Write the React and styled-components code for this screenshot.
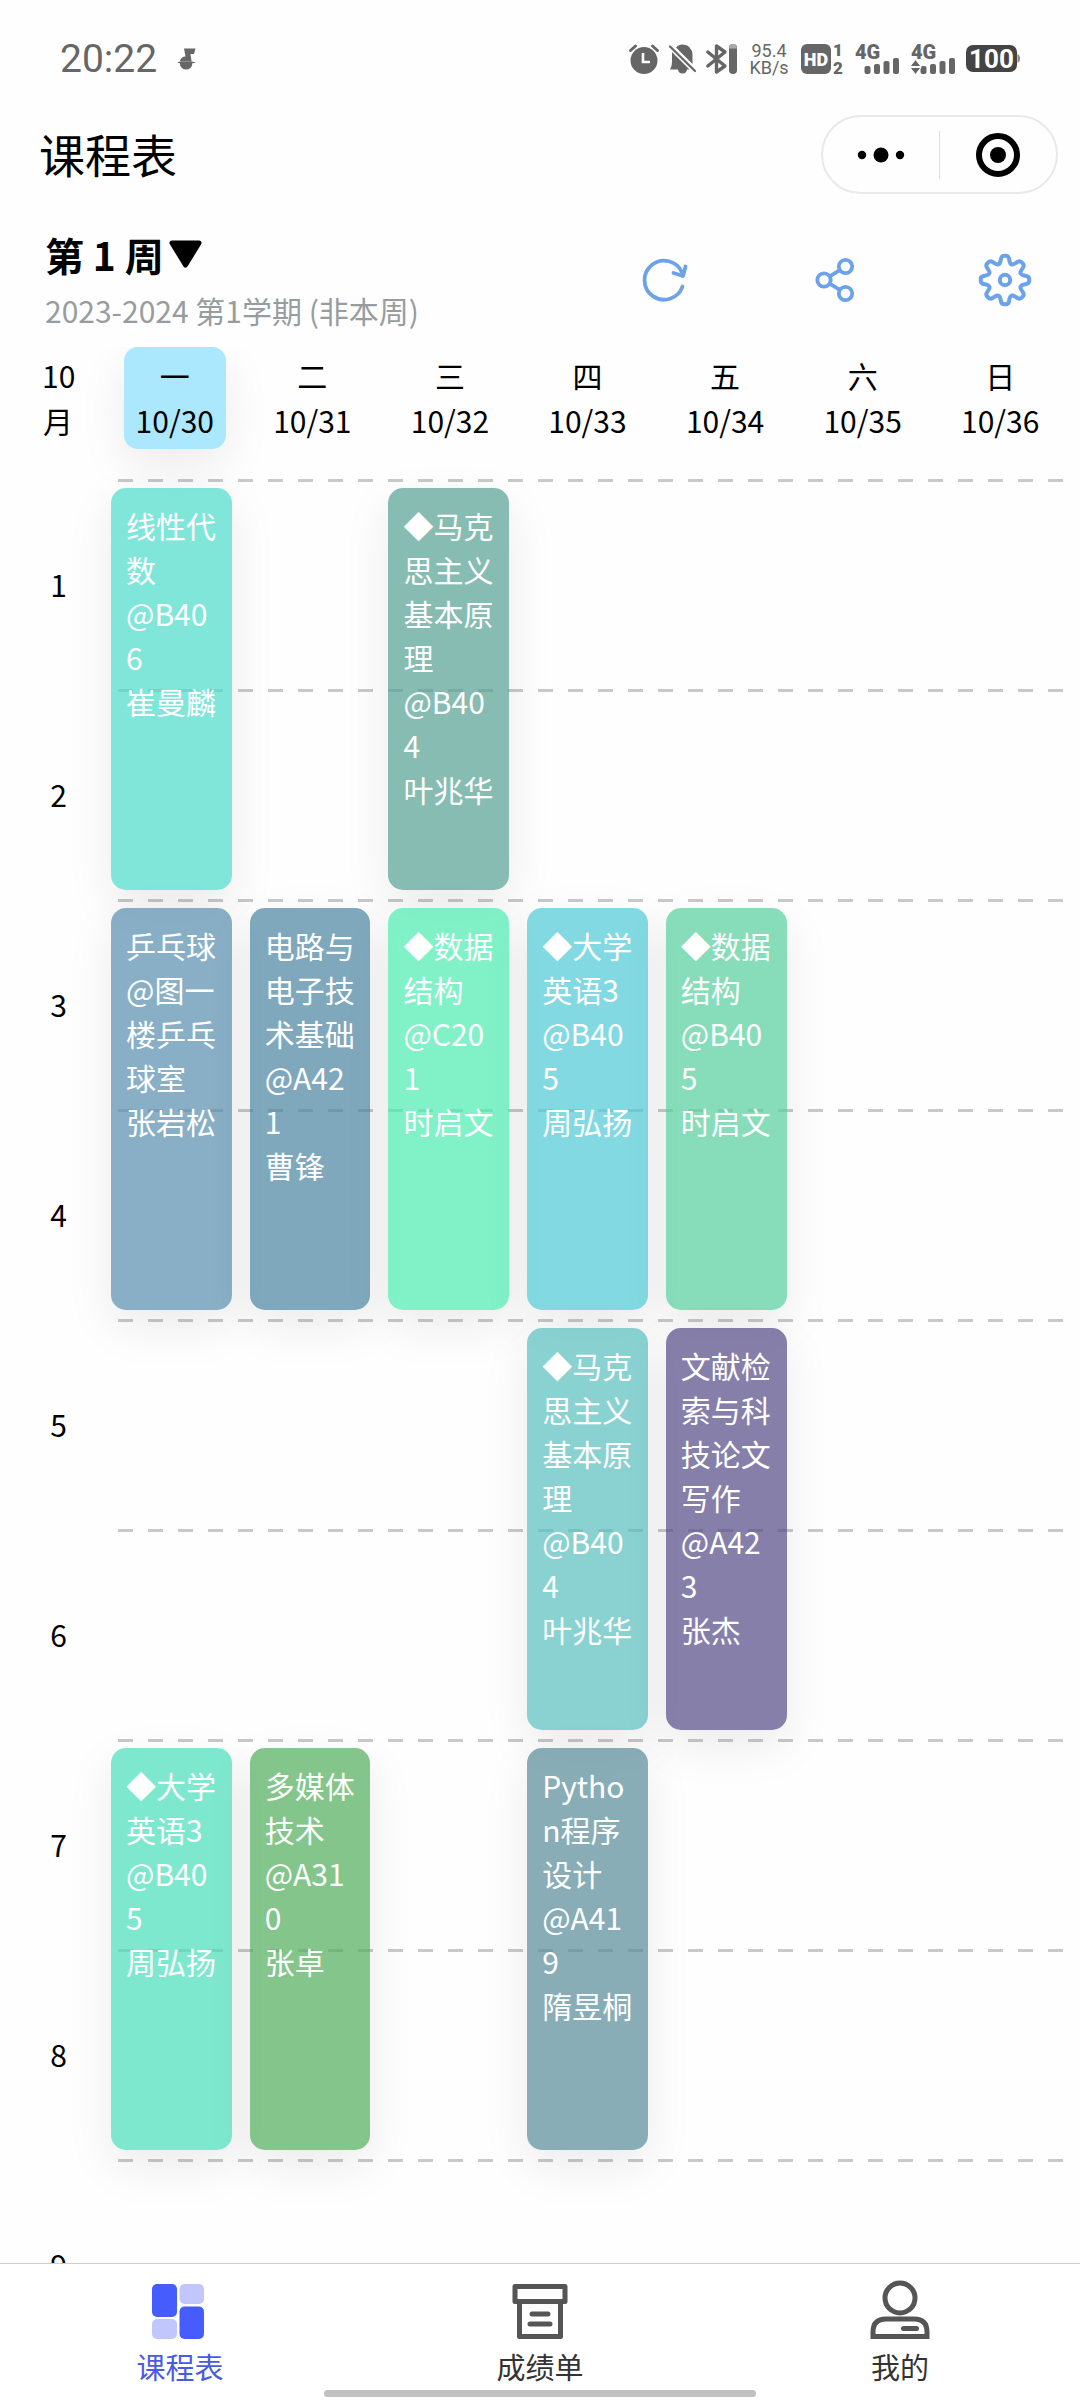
import React from "react";
import styled, { createGlobalStyle } from "styled-components";

const GlobalStyle = createGlobalStyle`
  * { box-sizing: border-box; }
  body {
    margin: 0;
    background: #fefefe;
    color: #000;
    font-family: "Noto Sans CJK SC", "Noto Sans", sans-serif;
    font-size: 30px;
    line-height: 44px;
  }
  button { font: inherit; color: inherit; background: none; border: 0; padding: 0; margin: 0; cursor: pointer; }
  svg { display: block; flex: none; overflow: visible; }
`;

const Screen = styled.div`
  display: flex;
  flex-direction: column;
  height: 100vh;
`;

/* ---------- status bar ---------- */

const StatusBar = styled.header`
  display: flex;
  align-items: center;
  justify-content: space-between;
  height: 115px;
  flex: none;
  padding: 2px 60px 0;
  color: #666;
`;

const StatusGroup = styled.div`
  display: flex;
  align-items: center;
  gap: ${(p) => p.$gap}px;
`;

const Clock = styled.time`
  font-family: Roboto, sans-serif;
  font-size: 39px;
`;

const Speed = styled.div`
  width: 44px;
  font-family: Roboto, sans-serif;
  font-size: 18px;
  line-height: 17px;
  text-align: center;
`;

/* ---------- title bar ---------- */

const TitleBar = styled.div`
  display: flex;
  align-items: center;
  justify-content: space-between;
  flex: none;
  padding: 0 22px 0 39px;
`;

const Title = styled.h1`
  margin: 0;
  padding-bottom: 3px;
  font-size: 46px;
  font-weight: 400;
  line-height: 76px;
`;

const Capsule = styled.div`
  display: flex;
  align-items: center;
  width: 237px;
  height: 79px;
  border: 2px solid #e9e9e9;
  border-radius: 40px;
`;

const CapsuleButton = styled.button`
  display: flex;
  align-items: center;
  justify-content: center;
  flex: 1;
  height: 48px;
  & + & { border-left: 1px solid #ddd; }
`;

/* ---------- week header ---------- */

const WeekBar = styled.section`
  display: flex;
  justify-content: space-between;
  align-items: flex-start;
  flex: none;
  padding: 38px 45px 15px;
`;

const WeekInfo = styled.div`
  display: flex;
  flex-direction: column;
  align-items: flex-start;
  gap: 12px;
`;

const WeekButton = styled.button`
  display: flex;
  align-items: center;
  gap: 5px;
  font-size: 39px;
  font-weight: 700;
`;

const Term = styled.p`
  margin: 0;
  color: #979d9f;
`;

const Actions = styled.div`
  display: flex;
  gap: 110px;
`;

const ActionButton = styled.button`
  display: flex;
  align-items: center;
  justify-content: center;
  width: 60px;
  height: 96px;
`;

/* ---------- timetable ---------- */

const Viewport = styled.main`
  flex: 1;
  min-height: 0;
  overflow: hidden;
`;

const Table = styled.table`
  display: block;
`;

const Head = styled.thead`
  display: block;
  padding-bottom: 30px;
  line-height: 45px;
`;

const Body = styled.tbody`
  display: block;
`;

const HeadRow = styled.tr`
  display: grid;
  grid-template-columns: 106px repeat(7, 1fr);
  padding-right: 11px;
`;

const MonthCell = styled.th`
  padding: 6px 32px 6px 42px;
  font-weight: 400;
`;

const DayCell = styled.th`
  padding: 0 18px;
  font-weight: 400;
`;

const DayBox = styled.div`
  display: flex;
  flex-direction: column;
  padding: 6px 0;
  border-radius: 14px;
  white-space: nowrap;
  background: ${(p) => (p.$today ? "#abe8fe" : "transparent")};
  box-shadow: ${(p) => (p.$today ? "0 16px 48px rgba(0, 0, 0, 0.08)" : "none")};
`;

const PeriodRow = styled.tr`
  display: grid;
  grid-template-columns: 93px repeat(7, 1fr);
  grid-template-rows: 210px;
  column-gap: 18px;
  padding-right: 16px;
  background: repeating-linear-gradient(90deg, #c9c9c9 0 15px, transparent 15px 30px)
    118px 0 / calc(100% - 135px) 3px no-repeat;
`;

const PeriodCell = styled.th`
  display: flex;
  align-items: center;
  justify-content: center;
  padding: 0 0 0 24px;
  font-weight: 400;
`;

const LessonCell = styled.td`
  padding: 9px 0 0;
  min-width: 0;
`;

const Lesson = styled.div`
  position: relative;
  display: flex;
  flex-direction: column;
  height: ${(p) => p.$span * 210 - 18}px;
  padding: 15px;
  border-radius: 15px;
  background: rgba(${(p) => p.$rgb}, 0.7);
  box-shadow: 0 16px 48px rgba(0, 0, 0, 0.08);
  color: #fff;
  word-break: break-all;
`;

/* ---------- tab bar ---------- */

const Footer = styled.footer`
  flex: none;
  border-top: 1px solid #ccc;
  background: #fff;
`;

const TabBar = styled.nav`
  display: grid;
  grid-template-columns: repeat(3, 1fr);
`;

const Tab = styled.a`
  display: flex;
  flex-direction: column;
  align-items: center;
  gap: 4px;
  padding: 12px 0 2px;
  font-size: 29px;
  text-decoration: none;
  color: ${(p) => (p.$active ? "#4a5be0" : "#333")};
`;

const HomeIndicator = styled.div`
  width: 40%;
  height: 7px;
  margin: 0 auto 3px;
  border-radius: 4px;
  background: #c1c1c1;
`;

/* ---------- icons ---------- */

const MusicIcon = () => (
  <svg width="19" height="22" viewBox="0 0 19 22" fill="#666">
    <path d="M7 0.500H18.500L17 6H13.500L14.500 13H3Q4 8.500 8.500 8.500Z" />
    <path d="M0 14.500L4 13.300H14L19 14.500L14 15.500H4Z" />
    <path d="M2.800 15H15.400A6.300 6.600 0 0 1 2.800 15Z" />
  </svg>
);

const AlarmIcon = () => (
  <svg width="30" height="30" viewBox="0 0 30 30" fill="none">
    <circle cx="15" cy="16.500" r="13.500" fill="#666" />
    <path d="M1.500 6.500L6.500 2M28.500 6.500L23.500 2" stroke="#666" strokeWidth="3" strokeLinecap="round" />
    <path d="M14 9V18H21" stroke="#fff" strokeWidth="2.600" />
  </svg>
);

const BellOffIcon = () => (
  <svg width="27" height="30" viewBox="0 0 27 30" fill="#666">
    <path d="M7 3.500Q9.500 0.500 13.500 0.500Q23 1 23.500 11V20L7 3.500Z" />
    <path d="M3 8L20.500 25.500H18Q17.500 29.500 13.500 29.500Q9.500 29.500 9 25.500H1Q3 22 3 18Z" />
    <path d="M1 2.500L26 27" stroke="#fefefe" strokeWidth="4.500" />
    <path d="M1 2.500L26 27" stroke="#666" strokeWidth="2.200" strokeLinecap="round" />
  </svg>
);

const BluetoothIcon = () => (
  <svg width="31" height="30" viewBox="0 0 31 30" fill="none">
    <path d="M1.800 8L19 22L10.500 28V2L19 8L1.800 22" stroke="#666" strokeWidth="3.400" strokeLinecap="round" strokeLinejoin="round" />
    <rect x="23" y="0" width="8" height="30" rx="4" fill="#666" />
    <path d="M23 4.500A4 4.500 0 0 1 31 4.500Z" fill="#aaa" />
  </svg>
);

const HdIcon = () => (
  <svg width="44" height="30" viewBox="0 0 44 30" fontFamily="Roboto, sans-serif" fontWeight="900">
    <rect width="30" height="30" rx="6" fill="#666" />
    <text x="15" y="21.500" fontSize="18" textAnchor="middle" fill="#fff">HD</text>
    <text x="37" y="12" fontSize="17" textAnchor="middle" fill="#666">1</text>
    <text x="37" y="29.500" fontSize="17" textAnchor="middle" fill="#666">2</text>
  </svg>
);

const SignalIcon = ({ width, transfer }) => (
  <svg width={width} height="30" viewBox={`0 0 ${width} 30`} fill="#666">
    <text x="0" y="15" fontFamily="Roboto, sans-serif" fontSize="20" fontWeight="900">4G</text>
    {[8, 10, 13, 16].map((h, i) => (
      <rect key={h} x={9.500 + i * 9.500} y={30 - h} width="6" height={h} rx="2" />
    ))}
    {transfer && (
      <g stroke="#fff" strokeWidth="1">
        <path d="M-1 22.500L4.500 15.500L10 22.500Z" />
        <path d="M-1 23.500H10L4.500 30.500Z" />
      </g>
    )}
  </svg>
);

const BatteryIcon = () => (
  <svg width="54" height="28" viewBox="0 0 54 28" fill="#444">
    <rect width="51" height="27" rx="7" />
    <path d="M51.500 9Q54 10 54 13.500T51.500 18Z" fill="#888" />
    <text x="25.500" y="23" fontFamily="Roboto, sans-serif" fontSize="26" fontWeight="700" textAnchor="middle" fill="#fff">100</text>
  </svg>
);

const MoreIcon = () => (
  <svg width="46" height="16" viewBox="0 0 46 16">
    <circle cx="4" cy="8" r="4.200" />
    <circle cx="23" cy="8" r="7.500" />
    <circle cx="42" cy="8" r="4.200" />
  </svg>
);

const CloseIcon = () => (
  <svg width="44" height="44" viewBox="0 0 44 44">
    <circle cx="22" cy="22" r="19" fill="none" stroke="#000" strokeWidth="6" />
    <circle cx="22" cy="22" r="8" />
  </svg>
);

const CaretIcon = () => (
  <svg width="33" height="28" viewBox="0 0 33 28">
    <path d="M3 3H30L16.500 25Z" stroke="#000" strokeWidth="5" strokeLinejoin="round" />
  </svg>
);

const BLUE = "#6ba2ea";

const RefreshIcon = () => (
  <svg width="46" height="46" viewBox="0 0 46 46" fill="none" stroke={BLUE} strokeWidth="3.800" strokeLinecap="round" strokeLinejoin="round">
    <path d="M40.500 29.500A19.500 19.500 0 1 1 40 15.500" />
    <path d="M31.500 16L41 19L43.500 9.500" />
  </svg>
);

const ShareIcon = () => (
  <svg width="40" height="46" viewBox="0 0 40 46" fill="none" stroke={BLUE} strokeWidth="3.800">
    <circle cx="9" cy="23" r="6.700" />
    <circle cx="30.500" cy="9.500" r="6.700" />
    <circle cx="30.500" cy="36.500" r="6.700" />
    <path d="M14.700 19.400L24.800 13.100M14.700 26.600L24.800 32.900" />
  </svg>
);

const gearPoints = Array.from({ length: 8 }, (_, i) => {
  const base = (i * Math.PI) / 4;
  return [[17, -0.3], [24.5, -0.14], [24.5, 0.14], [17, 0.3]].map(([r, a]) => [
    28 + r * Math.sin(base + a),
    28 - r * Math.cos(base + a),
  ]);
}).flat();

const gearPath =
  gearPoints
    .map(([x, y], i) => {
      const [px, py] = gearPoints[(i + 31) % 32];
      const [nx, ny] = gearPoints[(i + 1) % 32];
      const toward = (tx, ty) => {
        const d = Math.hypot(tx - x, ty - y);
        const t = Math.min(0.5, 2.8 / d);
        return `${(x + (tx - x) * t).toFixed(2)} ${(y + (ty - y) * t).toFixed(2)}`;
      };
      return `${i ? "L" : "M"}${toward(px, py)}Q${x.toFixed(2)} ${y.toFixed(2)} ${toward(nx, ny)}`;
    })
    .join("") + "Z";

const GearIcon = () => (
  <svg width="56" height="56" viewBox="0 0 56 56" fill="none" stroke={BLUE} strokeWidth="4" strokeLinejoin="round">
    <path d={gearPath} />
    <circle cx="28" cy="28" r="5.200" />
  </svg>
);

const TimetableIcon = () => (
  <svg width="60" height="64" viewBox="0 0 60 64">
    <rect x="2" y="8" width="25" height="33" rx="5" fill="#465cfd" />
    <rect x="29.500" y="8" width="24.500" height="20" rx="5" fill="#c1c7fd" />
    <rect x="2" y="43" width="25" height="20" rx="5" fill="#c1c7fd" />
    <rect x="29.500" y="30.500" width="24.500" height="32.500" rx="5" fill="#465cfd" />
  </svg>
);

const ScoresIcon = () => (
  <svg width="60" height="64" viewBox="0 0 60 64" fill="none" stroke="#555" strokeWidth="5" strokeLinejoin="round">
    <path d="M5 10.500H55V25.500H5Z" />
    <path d="M9.500 25.500V60.500H50.500V25.500" />
    <path d="M22 38H38M20 48H40" strokeLinecap="round" />
  </svg>
);

const ProfileIcon = () => (
  <svg width="60" height="64" viewBox="0 0 60 64" fill="none" stroke="#555" strokeWidth="5">
    <circle cx="30" cy="22" r="15" />
    <path d="M3 60.500V56Q3 43 16 43H44Q57 43 57 56V60.500Z" />
    <path d="M33.500 52.500H46.500" strokeLinecap="round" />
  </svg>
);

/* ---------- data ---------- */

const days = ["一", "二", "三", "四", "五", "六", "日"].map((name, i) => ({
  name,
  date: `10/${30 + i}`,
}));

const periods = [1, 2, 3, 4, 5, 6, 7, 8, 9];

const lessons = [
  { day: 0, start: 1, name: "线性代数", room: "B406", teacher: "崔曼麟", rgb: "76, 219, 202" },
  { day: 2, start: 1, name: "◆马克思主义基本原理", room: "B404", teacher: "叶兆华", rgb: "84, 159, 145" },
  { day: 0, start: 3, name: "乒乓球", room: "图一楼乒乓球室", teacher: "张岩松", rgb: "85, 141, 172" },
  { day: 1, start: 3, name: "电路与电子技术基础", room: "A421", teacher: "曹锋", rgb: "74, 131, 161" },
  { day: 2, start: 3, name: "◆数据结构", room: "C201", teacher: "时启文", rgb: "76, 236, 176" },
  { day: 3, start: 3, name: "◆大学英语3", room: "B405", teacher: "周弘扬", rgb: "79, 201, 214" },
  { day: 4, start: 3, name: "◆数据结构", room: "B405", teacher: "时启文", rgb: "84, 206, 155" },
  { day: 3, start: 5, name: "◆马克思主义基本原理", room: "B404", teacher: "叶兆华", rgb: "88, 189, 189" },
  { day: 4, start: 5, name: "文献检索与科技论文写作", room: "A423", teacher: "张杰", rgb: "82, 72, 134" },
  { day: 0, start: 7, name: "◆大学英语3", room: "B405", teacher: "周弘扬", rgb: "71, 222, 186" },
  { day: 1, start: 7, name: "多媒体技术", room: "A310", teacher: "张卓", rgb: "79, 173, 89" },
  { day: 3, start: 7, name: "Python程序设计", room: "A419", teacher: "隋昱桐", rgb: "86, 138, 151" },
];

const tabs = [
  { label: "课程表", Icon: TimetableIcon, active: true },
  { label: "成绩单", Icon: ScoresIcon },
  { label: "我的", Icon: ProfileIcon },
];

export default function App() {
  return (
    <Screen>
      <GlobalStyle />
      <StatusBar>
        <StatusGroup $gap={20}>
          <Clock>20:22</Clock>
          <MusicIcon />
        </StatusGroup>
        <StatusGroup $gap={10}>
          <AlarmIcon />
          <BellOffIcon />
          <BluetoothIcon />
          <Speed>
            95.4
            <br />
            KB/s
          </Speed>
          <HdIcon />
          <SignalIcon width={46} />
          <SignalIcon width={45} transfer />
          <BatteryIcon />
        </StatusGroup>
      </StatusBar>

      <TitleBar>
        <Title>课程表</Title>
        <Capsule>
          <CapsuleButton aria-label="更多"><MoreIcon /></CapsuleButton>
          <CapsuleButton aria-label="关闭"><CloseIcon /></CapsuleButton>
        </Capsule>
      </TitleBar>

      <WeekBar>
        <WeekInfo>
          <WeekButton>第 1 周<CaretIcon /></WeekButton>
          <Term>2023-2024 第1学期 (非本周)</Term>
        </WeekInfo>
        <Actions>
          <ActionButton aria-label="刷新"><RefreshIcon /></ActionButton>
          <ActionButton aria-label="分享"><ShareIcon /></ActionButton>
          <ActionButton aria-label="设置"><GearIcon /></ActionButton>
        </Actions>
      </WeekBar>

      <Viewport>
        <Table>
          <Head>
            <HeadRow>
              <MonthCell scope="col">10月</MonthCell>
              {days.map((d, i) => (
                <DayCell key={d.name} scope="col">
                  <DayBox $today={i === 0}>
                    <span>{d.name}</span>
                    <span>{d.date}</span>
                  </DayBox>
                </DayCell>
              ))}
            </HeadRow>
          </Head>
          <Body>
            {periods.map((period) => (
              <PeriodRow key={period}>
                <PeriodCell scope="row">{period}</PeriodCell>
                {days.map((d, i) => {
                  const lesson = lessons.find((l) => l.day === i && l.start === period);
                  return (
                    <LessonCell key={d.name}>
                      {lesson && (
                        <Lesson $span={2} $rgb={lesson.rgb}>
                          <span>{lesson.name}</span>
                          <span>{`@${lesson.room}`}</span>
                          <span>{lesson.teacher}</span>
                        </Lesson>
                      )}
                    </LessonCell>
                  );
                })}
              </PeriodRow>
            ))}
          </Body>
        </Table>
      </Viewport>

      <Footer>
        <TabBar>
          {tabs.map(({ label, Icon, active }) => (
            <Tab key={label} href="#" $active={active} aria-current={active ? "page" : undefined}>
              <Icon />
              {label}
            </Tab>
          ))}
        </TabBar>
        <HomeIndicator />
      </Footer>
    </Screen>
  );
}
